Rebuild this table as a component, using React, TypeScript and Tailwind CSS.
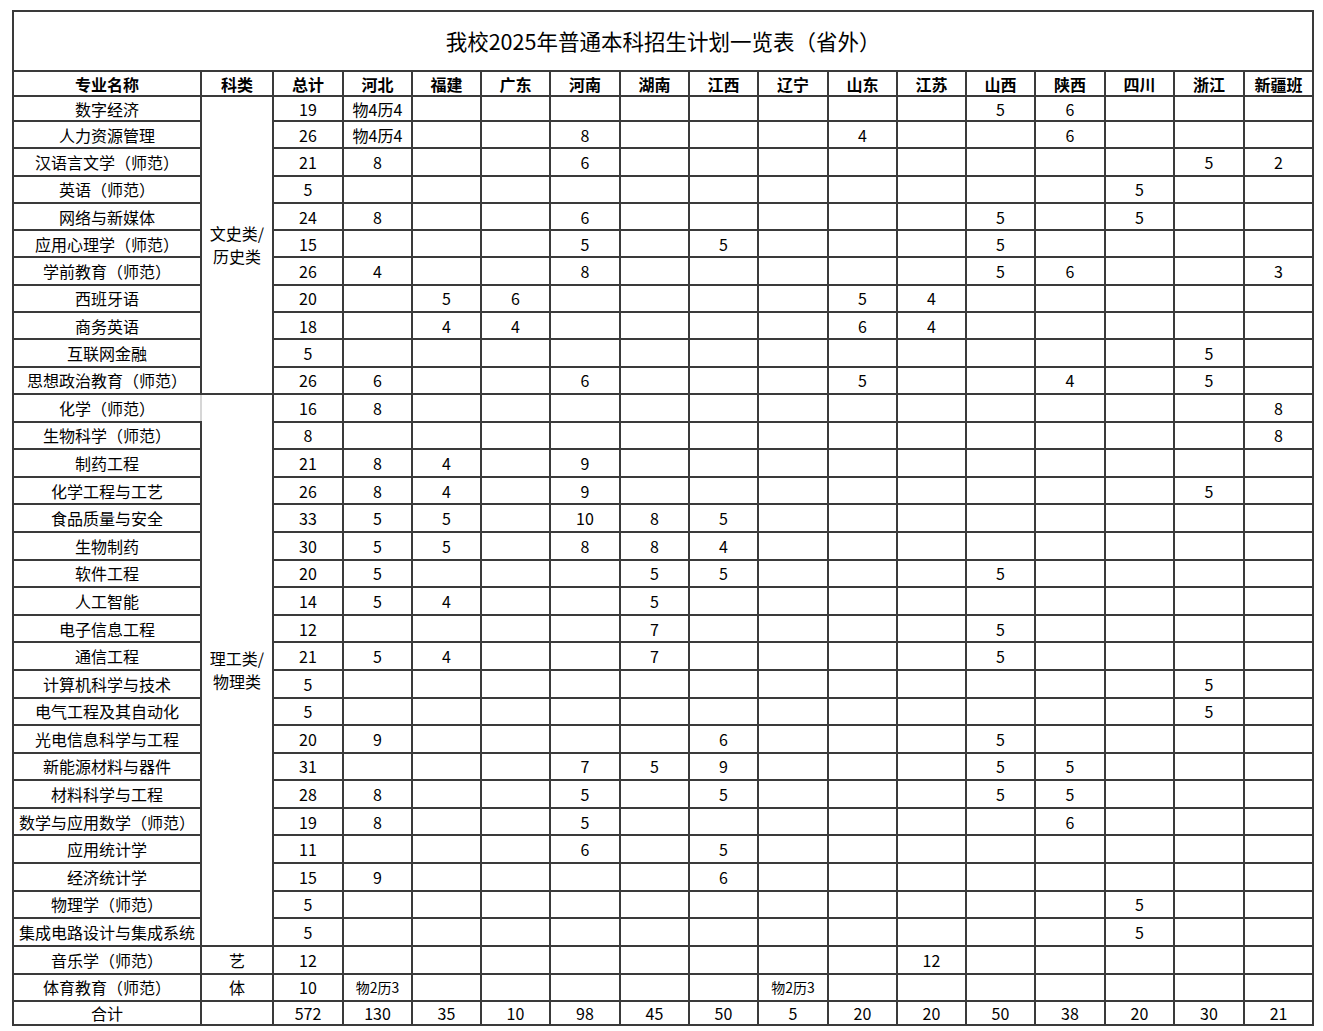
const provinces = ["河北", "福建", "广东", "河南", "湖南", "江西", "辽宁", "山东", "江苏", "山西", "陕西", "四川", "浙江", "新疆班"]

// 14 province columns, widths in px
const provinceWidths = [69, 69, 69, 70, 69, 69, 70, 69, 69, 69, 70, 69, 70, 69]

type Row = {
  name: string
  total: string
  cells: Record<string, string>
}

const wenshi: Row[] = [
  { name: "数字经济", total: "19", cells: { 河北: "物4历4", 山西: "5", 陕西: "6" } },
  { name: "人力资源管理", total: "26", cells: { 河北: "物4历4", 河南: "8", 山东: "4", 陕西: "6" } },
  { name: "汉语言文学（师范）", total: "21", cells: { 河北: "8", 河南: "6", 浙江: "5", 新疆班: "2" } },
  { name: "英语（师范）", total: "5", cells: { 四川: "5" } },
  { name: "网络与新媒体", total: "24", cells: { 河北: "8", 河南: "6", 山西: "5", 四川: "5" } },
  { name: "应用心理学（师范）", total: "15", cells: { 河南: "5", 江西: "5", 山西: "5" } },
  { name: "学前教育（师范）", total: "26", cells: { 河北: "4", 河南: "8", 山西: "5", 陕西: "6", 新疆班: "3" } },
  { name: "西班牙语", total: "20", cells: { 福建: "5", 广东: "6", 山东: "5", 江苏: "4" } },
  { name: "商务英语", total: "18", cells: { 福建: "4", 广东: "4", 山东: "6", 江苏: "4" } },
  { name: "互联网金融", total: "5", cells: { 浙江: "5" } },
  { name: "思想政治教育（师范）", total: "26", cells: { 河北: "6", 河南: "6", 山东: "5", 陕西: "4", 浙江: "5" } },
]

const ligong: Row[] = [
  { name: "化学（师范）", total: "16", cells: { 河北: "8", 新疆班: "8" } },
  { name: "生物科学（师范）", total: "8", cells: { 新疆班: "8" } },
  { name: "制药工程", total: "21", cells: { 河北: "8", 福建: "4", 河南: "9" } },
  { name: "化学工程与工艺", total: "26", cells: { 河北: "8", 福建: "4", 河南: "9", 浙江: "5" } },
  { name: "食品质量与安全", total: "33", cells: { 河北: "5", 福建: "5", 河南: "10", 湖南: "8", 江西: "5" } },
  { name: "生物制药", total: "30", cells: { 河北: "5", 福建: "5", 河南: "8", 湖南: "8", 江西: "4" } },
  { name: "软件工程", total: "20", cells: { 河北: "5", 湖南: "5", 江西: "5", 山西: "5" } },
  { name: "人工智能", total: "14", cells: { 河北: "5", 福建: "4", 湖南: "5" } },
  { name: "电子信息工程", total: "12", cells: { 湖南: "7", 山西: "5" } },
  { name: "通信工程", total: "21", cells: { 河北: "5", 福建: "4", 湖南: "7", 山西: "5" } },
  { name: "计算机科学与技术", total: "5", cells: { 浙江: "5" } },
  { name: "电气工程及其自动化", total: "5", cells: { 浙江: "5" } },
  { name: "光电信息科学与工程", total: "20", cells: { 河北: "9", 江西: "6", 山西: "5" } },
  { name: "新能源材料与器件", total: "31", cells: { 河南: "7", 湖南: "5", 江西: "9", 山西: "5", 陕西: "5" } },
  { name: "材料科学与工程", total: "28", cells: { 河北: "8", 河南: "5", 江西: "5", 山西: "5", 陕西: "5" } },
  { name: "数学与应用数学（师范）", total: "19", cells: { 河北: "8", 河南: "5", 陕西: "6" } },
  { name: "应用统计学", total: "11", cells: { 河南: "6", 江西: "5" } },
  { name: "经济统计学", total: "15", cells: { 河北: "9", 江西: "6" } },
  { name: "物理学（师范）", total: "5", cells: { 四川: "5" } },
  { name: "集成电路设计与集成系统", total: "5", cells: { 四川: "5" } },
]

const totals = ["130", "35", "10", "98", "45", "50", "5", "20", "20", "50", "38", "20", "30", "21"]

const td = "border-2 border-[#3a3a3a] p-0 text-center align-middle whitespace-nowrap"

function ProvinceCells({ row, small }: { row: Row; small?: boolean }) {
  return (
    <>
      {provinces.map((p) => (
        <td key={p} className={`${td} ${small && row.cells[p] ? "text-[14px]" : ""}`}>
          {row.cells[p] ?? ""}
        </td>
      ))}
    </>
  )
}

export default function App() {
  return (
    <div
      className="min-h-screen bg-white pl-[12px] pt-[10px] text-[16px] text-black"
      style={{ fontFamily: '"Noto Sans CJK SC", "Noto Sans", sans-serif' }}
    >
      <table className="w-[1300px] table-fixed border-collapse leading-none">
        <colgroup>
          <col className="w-[188px]" />
          <col className="w-[72px]" />
          <col className="w-[70px]" />
          {provinceWidths.map((w, i) => (
            <col key={i} style={{ width: w }} />
          ))}
        </colgroup>
        <tbody>
          <tr className="h-[60px]">
            <td colSpan={17} className={`${td} text-[21.5px]`}>
              我校2025年普通本科招生计划一览表（省外）
            </td>
          </tr>
          <tr className="h-[25px] font-bold">
            <td className={td}>专业名称</td>
            <td className={td}>科类</td>
            <td className={td}>总计</td>
            {provinces.map((p) => (
              <td key={p} className={td}>
                {p}
              </td>
            ))}
          </tr>

          {/* 文史类 */}
          {wenshi.map((row, i) => (
            <tr key={row.name} className={i === 0 ? "h-[25px]" : "h-[27.3px]"}>
              <td className={td}>{row.name}</td>
              {i === 0 && (
                <td rowSpan={wenshi.length} className={`${td} leading-[1.45]`}>
                  文史类/
                  <br />
                  历史类
                </td>
              )}
              <td className={td}>{row.total}</td>
              <ProvinceCells row={row} />
            </tr>
          ))}

          {/* 理工类 */}
          {ligong.map((row, i) => (
            <tr key={row.name} className="h-[27.6px]">
              <td className={`${td} border-r-[#d6d6d6]`}>{row.name}</td>
              {i === 0 && (
                <td rowSpan={ligong.length} className={`${td} leading-[1.45]`}>
                  理工类/
                  <br />
                  物理类
                </td>
              )}
              <td className={td}>{row.total}</td>
              <ProvinceCells row={row} />
            </tr>
          ))}

          <tr className="h-[28px]">
            <td className={td}>音乐学（师范）</td>
            <td className={td}>艺</td>
            <td className={td}>12</td>
            <ProvinceCells row={{ name: "", total: "", cells: { 江苏: "12" } }} />
          </tr>
          <tr className="h-[27px]">
            <td className={td}>体育教育（师范）</td>
            <td className={td}>体</td>
            <td className={td}>10</td>
            <ProvinceCells row={{ name: "", total: "", cells: { 河北: "物2历3", 辽宁: "物2历3" } }} small />
          </tr>
          <tr className="h-[24px]">
            <td className={td}>合计</td>
            <td className={td}></td>
            <td className={td}>572</td>
            {totals.map((t, i) => (
              <td key={i} className={td}>
                {t}
              </td>
            ))}
          </tr>
        </tbody>
      </table>
    </div>
  )
}
